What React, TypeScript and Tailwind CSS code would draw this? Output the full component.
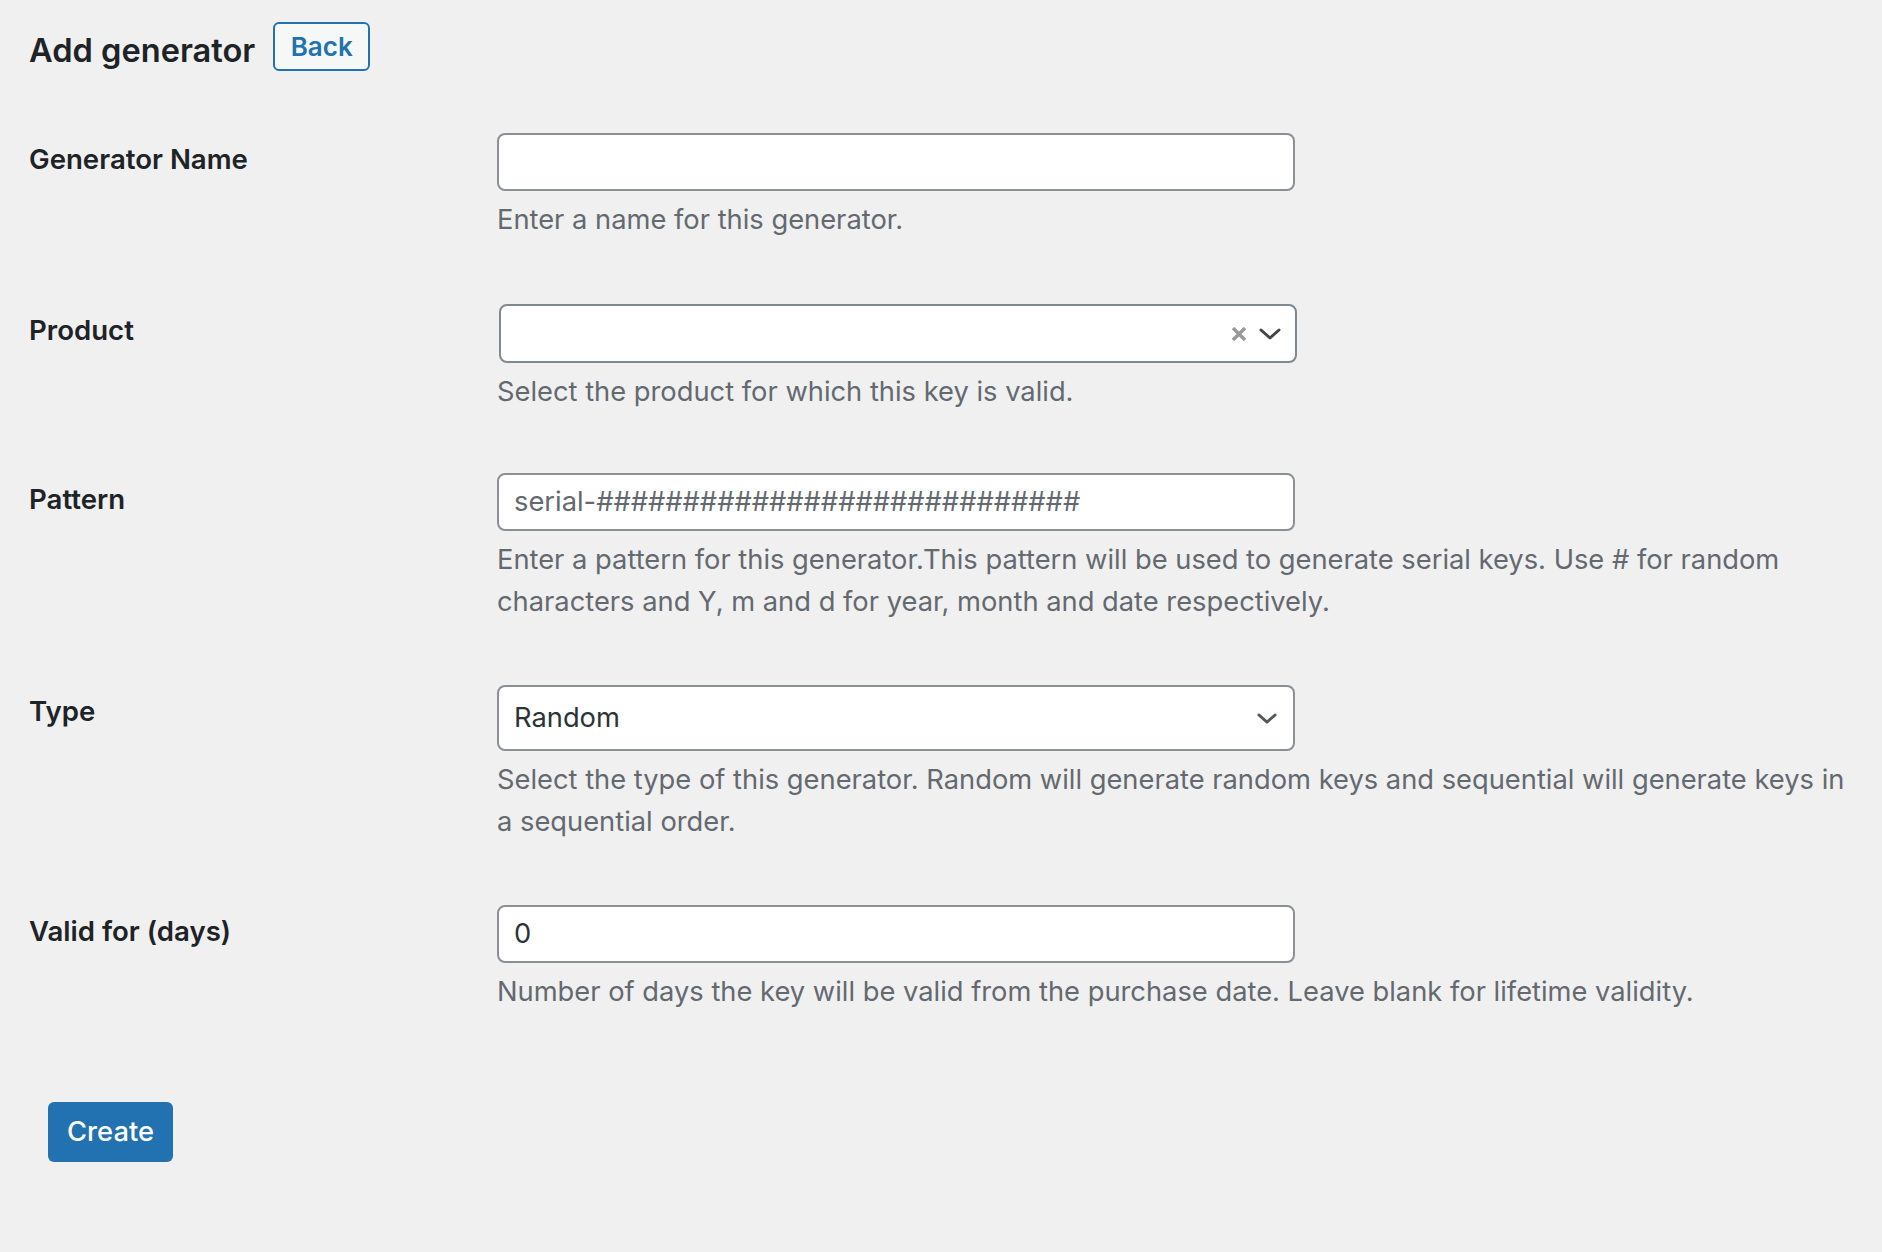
import React from 'react';

const font = "font-['Inter','Liberation_Sans',sans-serif]";

const Chevron: React.FC<{ className?: string }> = ({ className }) => (
  <svg viewBox="0 0 22 12" className={className} fill="none" stroke="currentColor" strokeWidth={3} strokeLinecap="round" strokeLinejoin="round">
    <path d="M2 2 L11 10 L20 2" />
  </svg>
);

const Row: React.FC<{ label: string; children: React.ReactNode; desc: React.ReactNode; extra?: string }> = ({
  label,
  children,
  desc,
  extra = 'pb-[31px]',
}) => (
  <div className={`flex pt-[31px] ${extra}`}>
    <div className="w-[468px] shrink-0 pt-[5px] text-[27.6px] leading-[42px] font-semibold text-[#1d2327]">{label}</div>
    <div className="flex-1 pr-[20px]">
      {children}
      <p className="mt-[8px] text-[27.3px] leading-[42px] text-[#646970]">{desc}</p>
    </div>
  </div>
);

export default function App() {
  return (
    <div className={`min-h-screen bg-[#f0f0f1] ${font}`}>
      <div className="pl-[29px] pt-[22px]">
        <div className="flex items-start gap-[18px]">
          <h1 className="pt-[4px] text-[32.6px] leading-[49px] font-semibold text-[#1d2327]">Add generator</h1>
          <button className="h-[49px] w-[97px] rounded-[6px] border-2 border-[#2271b1] bg-[#f6f7f7] text-[26px] font-semibold text-[#2271b1]">
            Back
          </button>
        </div>

        <div className="mt-[27px]">
          <Row label="Generator Name" desc="Enter a name for this generator." extra="pb-[32px]">
            <div className="h-[58px] w-[798px] rounded-[8px] border-2 border-[#8c8f94] bg-white" />
          </Row>

          <Row label="Product" desc="Select the product for which this key is valid." extra="pb-[29px]">
            <div className="ml-[2px] flex h-[59px] w-[798px] items-center justify-end gap-[13px] rounded-[8px] border-2 border-[#7e8993] bg-white pr-[14px]">
              <svg viewBox="0 0 14 14" className="h-[14px] w-[14px] text-[#999]" stroke="currentColor" strokeWidth={3.4}>
                <path d="M1 1 L13 13 M13 1 L1 13" />
              </svg>
              <Chevron className="h-[12px] w-[22px] text-[#444]" />
            </div>
          </Row>

          <Row
            label="Pattern"
            desc="Enter a pattern for this generator.This pattern will be used to generate serial keys. Use # for random characters and Y, m and d for year, month and date respectively."
          >
            <div className="flex h-[58px] w-[798px] items-center rounded-[8px] border-2 border-[#8c8f94] bg-white px-[15px] text-[27.3px] text-[#646970]">
              serial-############################
            </div>
          </Row>

          <Row
            label="Type"
            desc="Select the type of this generator. Random will generate random keys and sequential will generate keys in a sequential order."
          >
            <div className="flex h-[66px] w-[798px] items-center justify-between rounded-[8px] border-2 border-[#8c8f94] bg-white pl-[15px] pr-[16px] text-[27.3px] text-[#2c3338]">
              <span>Random</span>
              <Chevron className="h-[11px] w-[20px] text-[#50575e]" />
            </div>
          </Row>

          <Row label="Valid for (days)" desc="Number of days the key will be valid from the purchase date. Leave blank for lifetime validity.">
            <div className="flex h-[58px] w-[798px] items-center rounded-[8px] border-2 border-[#8c8f94] bg-white px-[15px] text-[27.3px] text-[#2c3338]">
              0
            </div>
          </Row>
        </div>

        <button className="ml-[19px] mt-[58px] h-[60px] w-[125px] rounded-[6px] bg-[#2271b1] text-[27.3px] font-medium text-white">
          Create
        </button>
      </div>
    </div>
  );
}
